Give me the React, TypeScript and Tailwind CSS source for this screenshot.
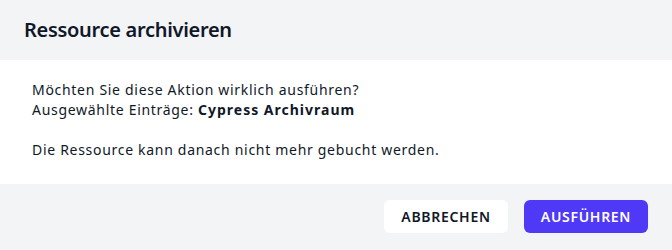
export default function App() {
  return (
    <div className="w-[672px] h-[250px] flex flex-col bg-white" style={{ fontFamily: '"Noto Sans", sans-serif' }}>
      <div className="h-[60px] bg-gray-100 px-6 flex items-center">
        <h2 className="text-xl leading-7 font-semibold text-gray-900 tracking-[-0.3px]">Ressource archivieren</h2>
      </div>
      <div className="px-8 pt-5 pb-6 text-sm leading-5 text-gray-900 tracking-[0.7px]">
        <p>Möchten Sie diese Aktion wirklich ausführen?</p>
        <p>
          Ausgewählte Einträge: <span className="font-bold tracking-[1px]">Cypress Archivraum</span>
        </p>
        <p className="mt-5">Die Ressource kann danach nicht mehr gebucht werden.</p>
      </div>
      <div className="flex-1 bg-gray-100 flex justify-end items-start gap-4 px-6 pt-4">
        <button className="h-[33px] w-[124px] rounded-md bg-white text-sm font-semibold uppercase tracking-wider text-gray-900">
          Abbrechen
        </button>
        <button className="h-[33px] w-[124px] rounded-md bg-indigo-600 text-sm font-semibold uppercase tracking-wider text-white">
          Ausführen
        </button>
      </div>
    </div>
  );
}
